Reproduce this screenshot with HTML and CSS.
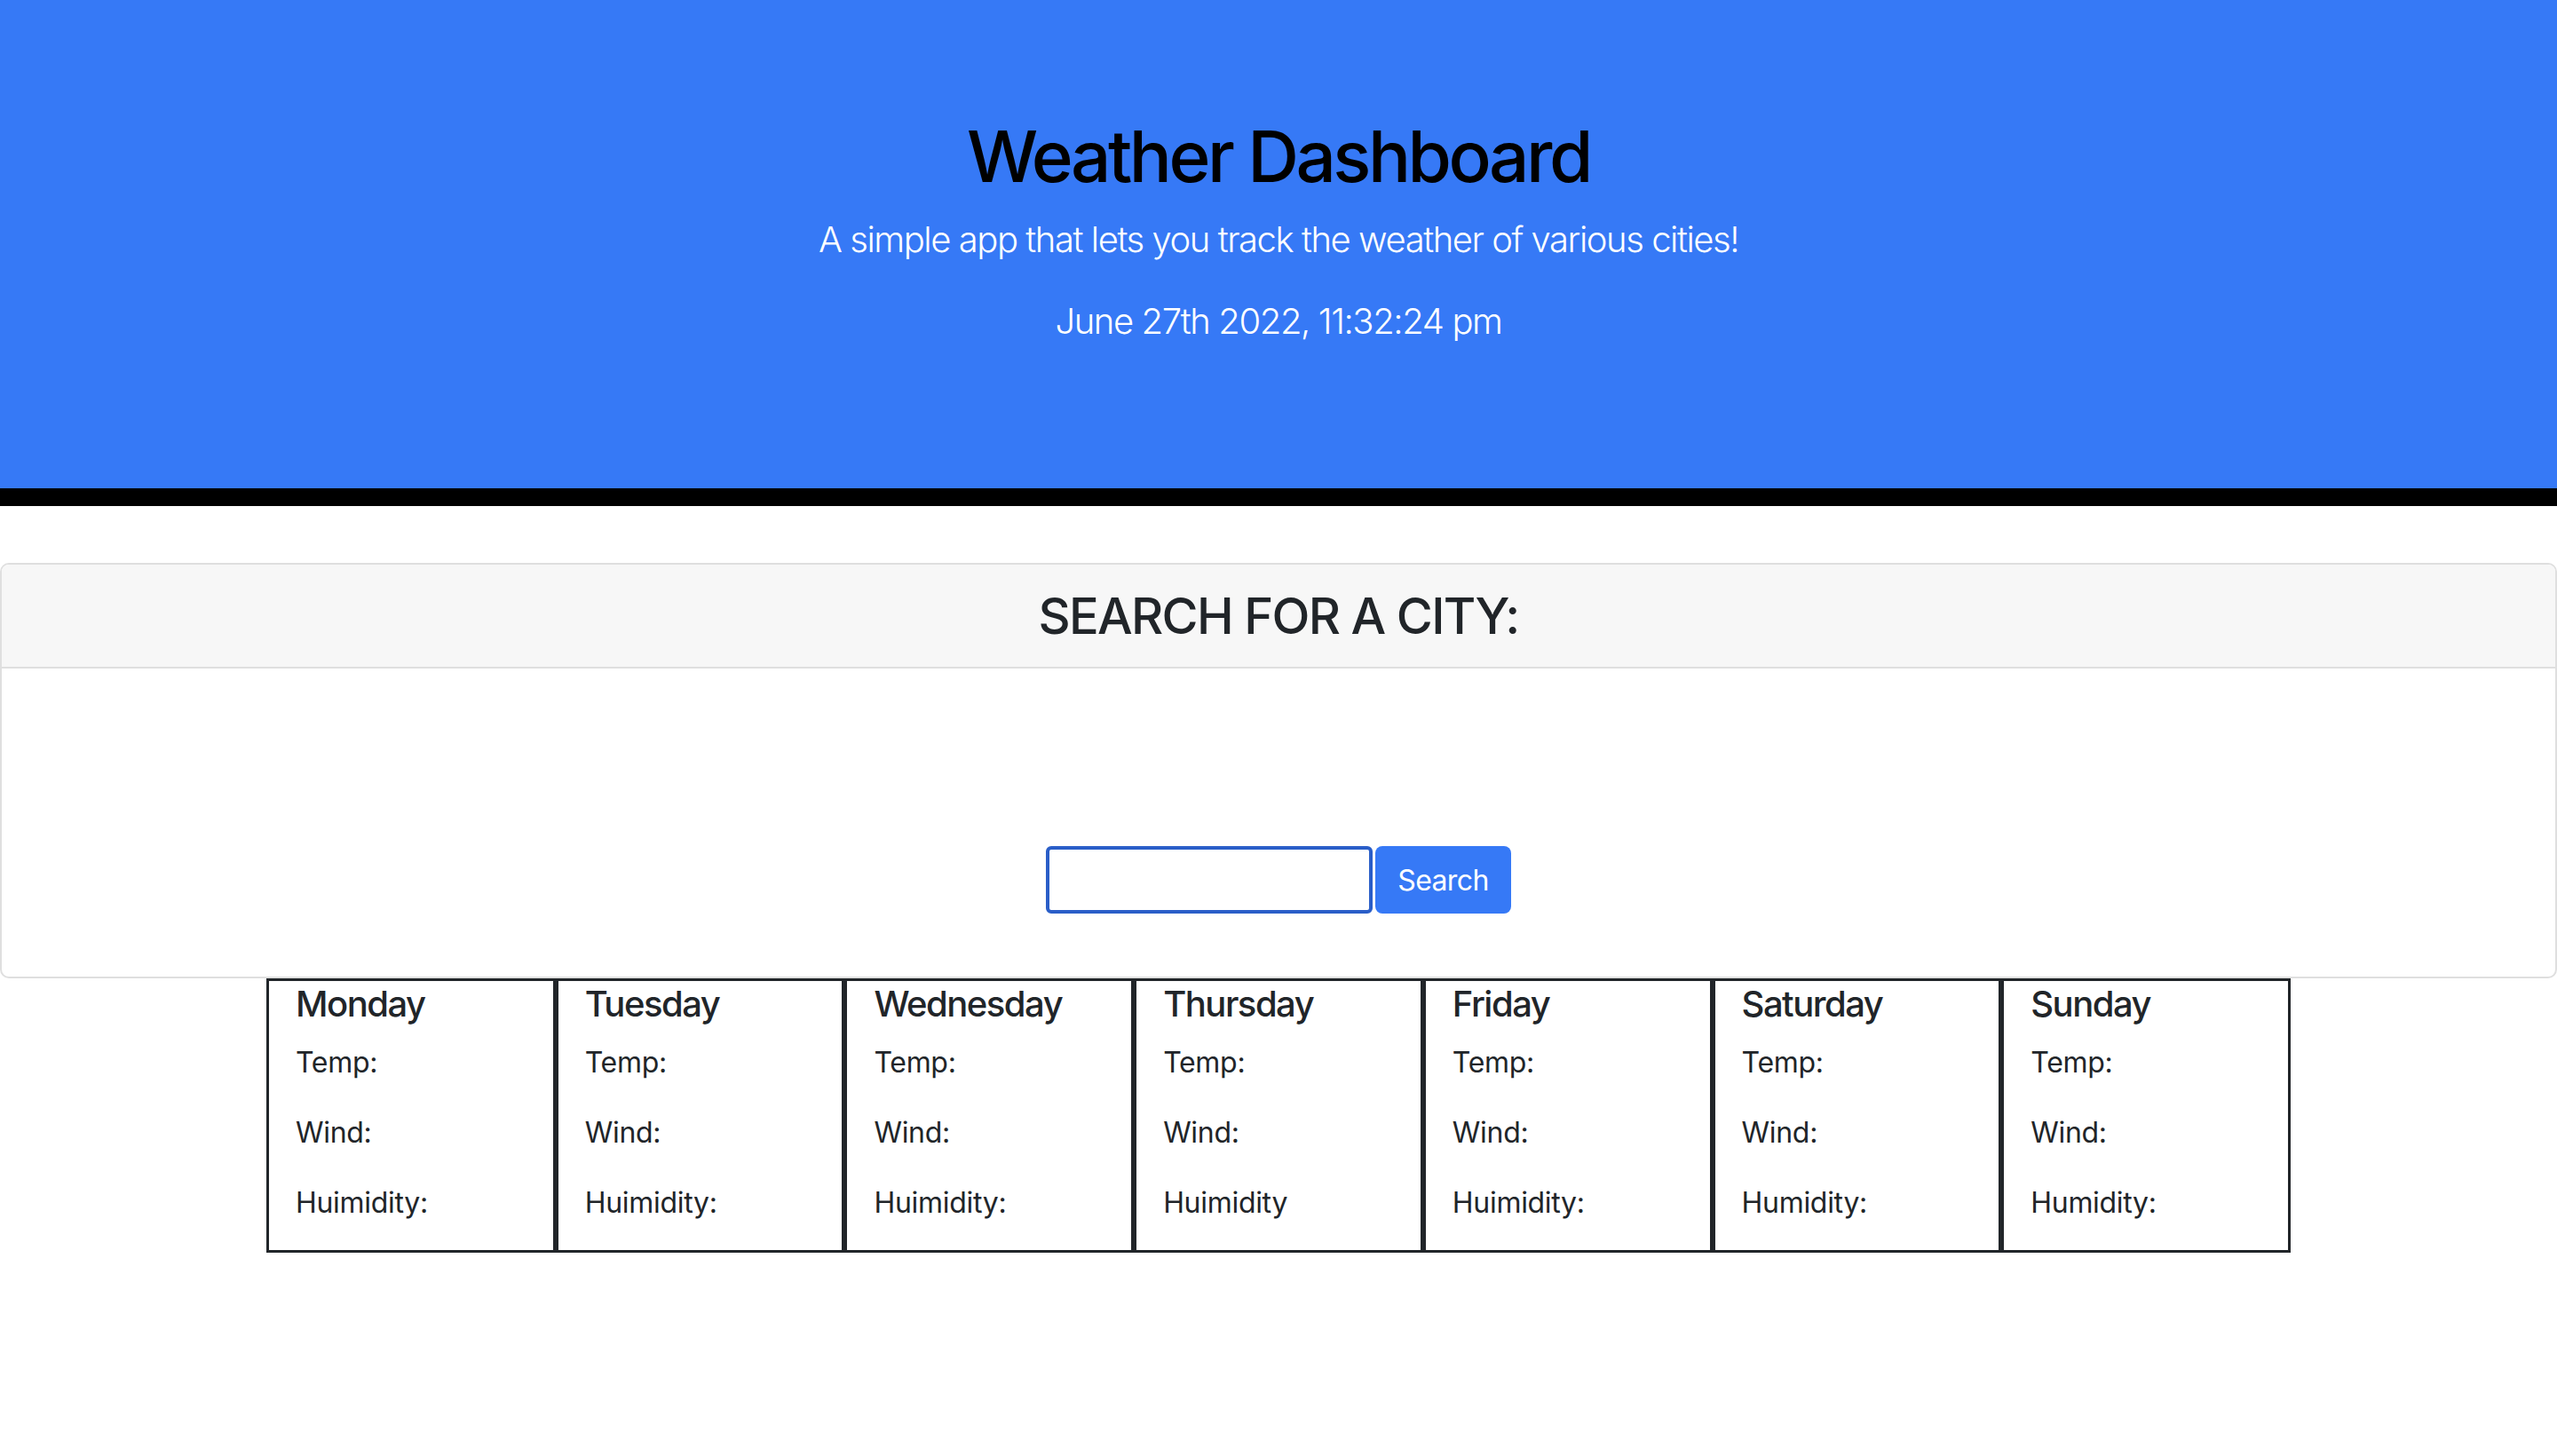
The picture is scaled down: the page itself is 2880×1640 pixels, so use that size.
FILE: index.html
```html
<!DOCTYPE html>
<html lang="en">
<head>
<meta charset="utf-8">
<title>Weather Dashboard</title>
<link rel="stylesheet" href="styles.css">
</head>
<body>
<header class="hero">
  <h1 class="hero-title">Weather Dashboard</h1>
  <p class="hero-lead">A simple app that lets you track the weather of various cities!</p>
  <p class="hero-date">June 27th 2022, 11:32:24 pm</p>
</header>

<section class="card">
  <div class="card-header">
    <h3 class="card-title">SEARCH FOR A CITY:</h3>
  </div>
  <div class="card-body">
    <div class="history"></div>
    <form class="search-form">
      <input class="search-input" type="text" aria-label="City">
      <button class="search-btn" type="button">Search</button>
    </form>
  </div>
</section>

<div class="forecast">
  <div class="day">
    <h5 class="day-name">Monday</h5>
    <p class="day-line">Temp:</p>
    <p class="day-line">Wind:</p>
    <p class="day-line">Huimidity:</p>
  </div>
  <div class="day">
    <h5 class="day-name">Tuesday</h5>
    <p class="day-line">Temp:</p>
    <p class="day-line">Wind:</p>
    <p class="day-line">Huimidity:</p>
  </div>
  <div class="day">
    <h5 class="day-name">Wednesday</h5>
    <p class="day-line">Temp:</p>
    <p class="day-line">Wind:</p>
    <p class="day-line">Huimidity:</p>
  </div>
  <div class="day">
    <h5 class="day-name">Thursday</h5>
    <p class="day-line">Temp:</p>
    <p class="day-line">Wind:</p>
    <p class="day-line">Huimidity</p>
  </div>
  <div class="day">
    <h5 class="day-name">Friday</h5>
    <p class="day-line">Temp:</p>
    <p class="day-line">Wind:</p>
    <p class="day-line">Huimidity:</p>
  </div>
  <div class="day">
    <h5 class="day-name">Saturday</h5>
    <p class="day-line">Temp:</p>
    <p class="day-line">Wind:</p>
    <p class="day-line">Humidity:</p>
  </div>
  <div class="day">
    <h5 class="day-name">Sunday</h5>
    <p class="day-line">Temp:</p>
    <p class="day-line">Wind:</p>
    <p class="day-line">Humidity:</p>
  </div>
</div>
</body>
</html>
```

FILE: styles.css
```css
* {
  box-sizing: border-box;
}

html, body {
  margin: 0;
  padding: 0;
  background: #ffffff;
}

body {
  font-family: Inter, "Noto Sans", "Liberation Sans", sans-serif;
  color: #212529;
}

.hero {
  background: #3679f6;
  border-bottom: 20px solid #000000;
  padding: 128px 64px 126px;
  margin-bottom: 64px;
  text-align: center;
}

.hero-title {
  margin: 0 0 16px;
  font-size: 80px;
  line-height: 96px;
  font-weight: 500;
  color: #000000;
  letter-spacing: -3.5px;
}

.hero-lead,
.hero-date {
  margin: 0 0 32px;
  font-size: 40px;
  line-height: 60px;
  font-weight: 300;
  color: #ffffff;
}

.hero-lead {
  letter-spacing: -1.45px;
}

.hero-date {
  letter-spacing: -1.4px;
}

.card {
  border: 2px solid #dfdfdf;
  border-radius: 10px;
  background: #ffffff;
}

.card-header {
  background: #f7f7f7;
  border-bottom: 2px solid #dfdfdf;
  border-radius: 8px 8px 0 0;
  padding: 25px 40px 23px;
  text-align: center;
}

.card-title {
  margin: 0;
  font-size: 56px;
  line-height: 67px;
  font-weight: 500;
  color: #212529;
  letter-spacing: -1.7px;
}

.card-body {
  padding: 40px 40px 40px;
}

.history {
  height: 160px;
}

.search-form {
  display: flex;
  justify-content: center;
  gap: 3px;
  margin: 0 0 31px;
}

.search-input {
  width: 368px;
  height: 76px;
  border: 4px solid #2a5ec8;
  border-radius: 6px;
  background: #ffffff;
  padding: 0 12px;
  font: inherit;
  font-size: 32px;
  outline: none;
}

.search-btn {
  width: 153px;
  height: 76px;
  border: none;
  border-radius: 8px;
  background: #3679f6;
  color: #ffffff;
  font-family: inherit;
  font-size: 32px;
  font-weight: 400;
  letter-spacing: -0.6px;
  padding: 0;
}

.forecast {
  width: 2280px;
  margin: 0 auto;
  display: grid;
  grid-template-columns: repeat(7, 1fr);
}

.day {
  border: 3px solid #212529;
  padding: 2px 30px 0;
}

.day-name {
  margin: 0 0 18px;
  font-size: 40px;
  line-height: 48px;
  font-weight: 500;
  color: #212529;
  letter-spacing: -1.5px;
}

.day-line {
  margin: 0 0 31px;
  font-size: 32px;
  line-height: 48px;
  font-weight: 400;
  color: #212529;
  letter-spacing: -0.3px;
}

.day-line:last-child {
  margin-bottom: 29px;
}
```
